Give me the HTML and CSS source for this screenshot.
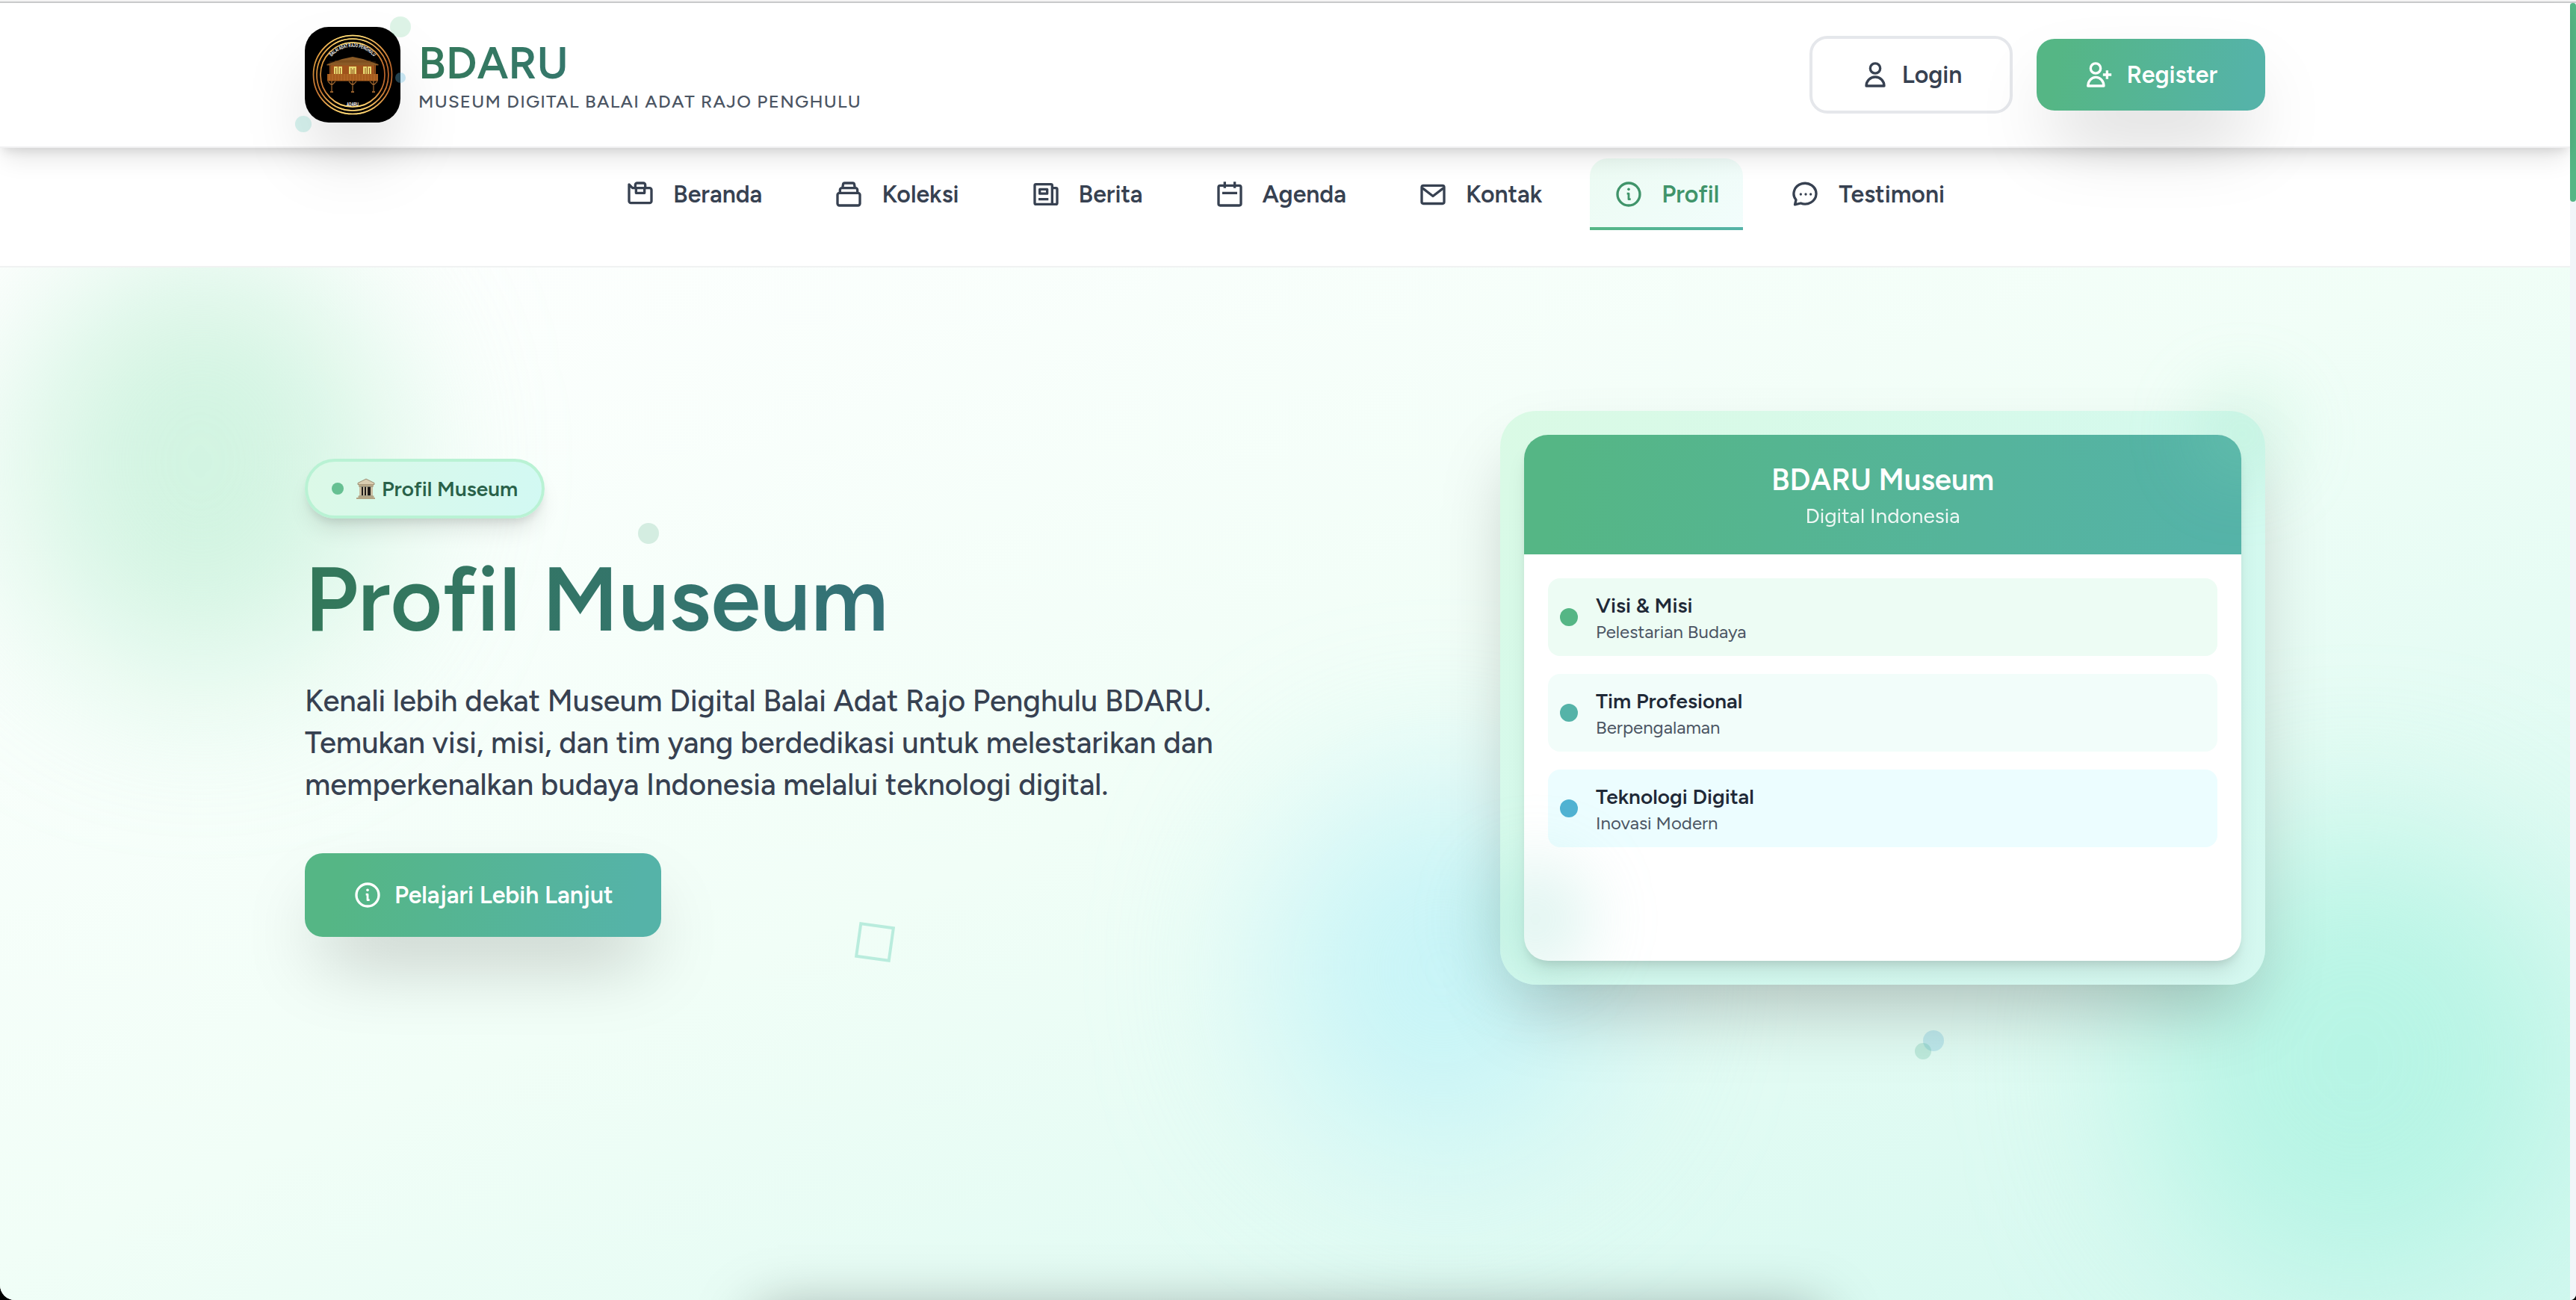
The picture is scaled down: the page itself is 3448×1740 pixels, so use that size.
FILE: index.html
```html
<!DOCTYPE html>
<html lang="id">
<head>
<meta charset="utf-8">
<title>Profil Museum - BDARU</title>
<link rel="stylesheet" href="styles.css">
</head>
<body>
<div class="window">
<div class="page">
  <header class="header">
    <div class="container header-row">
      <a class="brand">
        <span class="logo">
          <svg class="logo-art" viewBox="0 0 128 128" aria-hidden="true">
            <defs>
              <linearGradient id="gold" x1="0" y1="0" x2="1" y2="1">
                <stop offset="0" stop-color="#b5642a"/>
                <stop offset=".18" stop-color="#e0a040"/>
                <stop offset=".38" stop-color="#b5602a"/>
                <stop offset=".6" stop-color="#c06a2c"/>
                <stop offset=".85" stop-color="#b5602a"/>
                <stop offset="1" stop-color="#e0a040"/>
              </linearGradient>
              <linearGradient id="shine" x1="0" y1="0" x2="0" y2="1">
                <stop offset="0" stop-color="#ffe27a"/>
                <stop offset=".22" stop-color="#e8a548" stop-opacity=".5"/>
                <stop offset=".45" stop-color="#c06a2c" stop-opacity="0"/>
                <stop offset=".75" stop-color="#e8a548" stop-opacity=".4"/>
                <stop offset="1" stop-color="#ffe27a"/>
              </linearGradient>
              <path id="arc-top" d="M35.500 40A37.500 37.500 0 0 1 92.500 40"/>
            </defs>
            <rect width="128" height="128" fill="#000"/>
            <g fill="none" stroke="url(#gold)" stroke-width="1.7">
              <circle cx="64" cy="64" r="52.5"/><circle cx="64" cy="64" r="48"/><circle cx="64" cy="64" r="43"/>
            </g>
            <g fill="none" stroke="url(#shine)" stroke-width="1.7">
              <circle cx="64" cy="64" r="52.5"/><circle cx="64" cy="64" r="48"/><circle cx="64" cy="64" r="43"/>
            </g>
            <text class="logo-text"><textPath href="#arc-top" startOffset="50%" text-anchor="middle" textLength="64" lengthAdjust="spacingAndGlyphs">BALAI ADAT RAJO PENGHULU</textPath></text>
            <text class="logo-text" x="64" y="106" text-anchor="middle" textLength="16" lengthAdjust="spacingAndGlyphs">ADARU</text>
            <path d="M33 51H95V64H33Z" fill="#a0521c"/>
            <path d="M29.500 51.500V50L50 43l14-3 14 3 20.500 7V51.500Z" fill="#8a5a26"/>
            <path d="M33 47H95M40 45.500H88" stroke="#6d4218" stroke-width=".6"/>
            <path d="M34.500 51v12M93.500 51v12" stroke="#6d4218"/>
            <path d="M39 53h11v10H39zM59 53h10v10H59zM78 53h11v10H78z" fill="#e8d870"/>
            <path d="M41.500 55v8M44.500 53v10M47.500 55v8M62 55v8M64 57v6M66 55v8M81 55v8M83.500 53v10M86.500 55v8" stroke="#8a4a18" stroke-width=".9"/>
            <path d="M30 63H98V72.500H30Z" fill="#a65c1e"/>
            <path d="M33 63v9M37 63v9M41 63v9M45 63v9M49 63v9M53 63v9M57 63v9M61 63v9M65 63v9M69 63v9M73 63v9M77 63v9M81 63v9M85 63v9M89 63v9M93 63v9M97 63v9" stroke="#c87c38" stroke-width=".6"/>
            <path d="M36 72v15M64 72v15M92 72v15M31 73l5 5 5-5M59 73l5 5 5-5M87 73l5 5 5-5" fill="none" stroke="#96602c" stroke-width="1.300"/>
            <path d="M34 86h4v2h-4zM62 86h4v2h-4zM90 86h4v2h-4z" fill="#96602c"/>
          </svg>
          <i class="dot dot-green"></i><i class="dot dot-teal"></i><i class="dot dot-blue"></i>
        </span>
        <span class="brand-text">
          <strong class="brand-name">BDARU</strong>
          <span class="brand-tag">MUSEUM DIGITAL BALAI ADAT RAJO PENGHULU</span>
        </span>
      </a>
      <div class="actions">
        <a class="btn btn-outline">
          <svg class="icon" viewBox="0 0 24 24"><circle cx="12" cy="6.900" r="4"/><path d="M4.800 21a7.200 7.200 0 0 1 14.400 0Z"/></svg>
          Login
        </a>
        <a class="btn btn-fill">
          <svg class="icon" viewBox="0 0 24 24"><circle cx="9" cy="6.900" r="4"/><path d="M2.800 21a6.400 7 0 0 1 12.800 0Z"/><path d="M18.200 8.500v7M14.900 12h6.800"/></svg>
          Register
        </a>
      </div>
    </div>
  </header>

  <nav class="nav">
    <a class="nav-item"><svg class="icon" viewBox="0 0 24 24"><path d="M3 4.200V17.500A1.500 1.500 0 0 0 4.500 19h15a1.500 1.500 0 0 0 1.500-1.500v-9A1.500 1.500 0 0 0 19.500 7H5.800Z"/><path d="M8 7V4.500A1.500 1.500 0 0 1 9.500 3h5A1.500 1.500 0 0 1 16 4.500V7M8.600 7v4h6.800V7"/></svg>Beranda</a>
    <a class="nav-item"><svg class="icon" viewBox="0 0 24 24"><rect x="3" y="11" width="18" height="10" rx="1.500"/><path d="M5 11V8.500A1.500 1.500 0 0 1 6.500 7h11A1.500 1.500 0 0 1 19 8.500V11M7 7l.5-2.900A1.300 1.300 0 0 1 8.800 3h6.400a1.300 1.300 0 0 1 1.300 1.100L17 7"/></svg>Koleksi</a>
    <a class="nav-item"><svg class="icon" viewBox="0 0 24 24"><path d="M17 20V5a1 1 0 0 0-1-1H4a1 1 0 0 0-1 1v14a1 1 0 0 0 1 1h16a1 1 0 0 0 1-1V8a1 1 0 0 0-1-1h-3"/><path d="M7 8h6v3.500H7ZM6 16h8"/></svg>Berita</a>
    <a class="nav-item"><svg class="icon" viewBox="0 0 24 24"><rect x="3" y="5" width="18" height="16" rx="1.300"/><path d="M8 2v5M16 2v5M6 11h12"/></svg>Agenda</a>
    <a class="nav-item"><svg class="icon" viewBox="0 0 24 24"><rect x="3" y="5" width="18" height="14.500" rx="1.300"/><path d="M3.500 7l8.500 6.500L20.500 7"/></svg>Kontak</a>
    <a class="nav-item active"><svg class="icon" viewBox="0 0 24 24"><circle cx="12" cy="12" r="9"/><path d="M10.600 11.500H12V16h1.600" stroke-width="1.700"/><circle class="solid" cx="12" cy="8" r="1.100"/></svg>Profil</a>
    <a class="nav-item"><svg class="icon" viewBox="0 0 24 24"><path d="M4.200 16.500A9 8.300 0 1 1 8 19.200L3.300 20.300Z"/><circle class="solid" cx="8" cy="12" r="1"/><circle class="solid" cx="12" cy="12" r="1"/><circle class="solid" cx="16" cy="12" r="1"/></svg>Testimoni</a>
  </nav>

  <main class="hero">
    <i class="blob blob-green"></i><i class="blob blob-cyan"></i><i class="blob blob-teal"></i>
    <i class="bubble bubble-a"></i><i class="bubble bubble-b"></i><i class="bubble bubble-c"></i><i class="square"></i>
    <div class="container hero-row">
      <section class="intro">
        <span class="badge">
          <i class="badge-dot"></i>
          <svg class="museum" viewBox="0 0 28 28" role="img" aria-label="Museum">
            <path d="M14 1 25 6.500V8.500H3V6.500Z" fill="#d9cdb0" stroke="#8b7a5e" stroke-width=".8"/>
            <rect x="4" y="8.500" width="20" height="3" fill="#b8a888"/>
            <rect x="5" y="11.500" width="18" height="12" fill="#1e1a18"/>
            <path d="M5 11.500h3v12H5zM10 11.500h2v12h-2zM14 11.500h2v12h-2zM20 11.500h3v12h-3z" fill="#c9bca0"/>
            <path d="M3.500 23.500h21V26H26v2H1v-2h2.500Z" fill="#b3a585"/>
          </svg>
          <span>Profil Museum</span>
        </span>
        <h1 class="title"><span>Profil Museum</span></h1>
        <p class="lead">Kenali lebih dekat Museum Digital Balai Adat Rajo Penghulu BDARU.<br>Temukan visi, misi, dan tim yang berdedikasi untuk melestarikan dan<br>memperkenalkan budaya Indonesia melalui teknologi digital.</p>
        <a class="btn btn-fill btn-large">
          <svg class="icon" viewBox="0 0 24 24"><circle cx="12" cy="12" r="9"/><path d="M10.600 11.500H12V16h1.600" stroke-width="1.700"/><circle class="solid" cx="12" cy="8" r="1.100"/></svg>
          Pelajari Lebih Lanjut
        </a>
      </section>

      <section class="frame">
        <div class="card">
          <div class="card-head">
            <h2>BDARU Museum</h2>
            <p>Digital Indonesia</p>
          </div>
          <ul class="card-body">
            <li class="row row-green"><i></i><div><h3>Visi &amp; Misi</h3><p>Pelestarian Budaya</p></div></li>
            <li class="row row-teal"><i></i><div><h3>Tim Profesional</h3><p>Berpengalaman</p></div></li>
            <li class="row row-cyan"><i></i><div><h3>Teknologi Digital</h3><p>Inovasi Modern</p></div></li>
          </ul>
        </div>
        <i class="glow glow-top"></i><i class="glow glow-bottom"></i>
      </section>
    </div>
    <div class="next-panel"></div>
  </main>
</div>
<div class="scrollbar"><div class="thumb"></div></div>
</div>
</body>
</html>
```

FILE: styles.css
```css
* { box-sizing: border-box; margin: 0; padding: 0; }

body {
  background: #000;
  font-family: "Figtree", "Lato", sans-serif;
  font-size: 32px;
  color: #374151;
}

.window {
  display: flex;
  height: 1740px;
  border-top: 2px solid #f4f4f4;
  border-radius: 0 0 8px 20px;
  overflow: hidden;
  background: #fff;
}

.page {
  flex: 1;
  display: flex;
  flex-direction: column;
  border-top: 2px solid #c9cacb;
}

.scrollbar { width: 8px; background: #f1f5f9; border-top: 2px solid #c9cacb; }
.thumb { height: 266px; border-radius: 8px; background: #55b685; }

.container { width: 2624px; margin: 0 auto; }

.icon {
  width: 40px;
  height: 40px;
  flex: none;
  fill: none;
  stroke: currentColor;
  stroke-width: 2;
  stroke-linejoin: round;
}
.icon .solid { fill: currentColor; stroke: none; }

/* header */
.header {
  position: relative;
  z-index: 2;
  height: 194px;
  flex: none;
  background: #fff;
  border-bottom: 2px solid #f1f1f2;
  box-shadow: 0 20px 30px -6px rgba(0, 0, 0, .1), 0 8px 12px -4px rgba(0, 0, 0, .1);
}
.header-row { display: flex; align-items: center; justify-content: space-between; height: 192px; }
.brand { display: flex; align-items: center; gap: 24px; }
.logo { position: relative; width: 128px; height: 128px; }
.logo-art {
  display: block;
  width: 128px;
  height: 128px;
  border-radius: 32px;
  box-shadow: 0 50px 100px -24px rgba(0, 0, 0, .25);
}
.logo-text { fill: #fff; font-family: "Liberation Sans", sans-serif; font-size: 7px; font-weight: 700; }
.dot { position: absolute; border-radius: 50%; }
.dot-green { width: 28px; height: 28px; top: -14px; right: -14px; background: rgba(104, 205, 145, .22); }
.dot-teal { width: 22px; height: 22px; bottom: -13px; left: -13px; background: rgba(90, 200, 185, .25); }
.dot-blue { width: 14px; height: 14px; top: 61px; right: -7px; background: rgba(103, 190, 225, .35); }

.brand-text { display: flex; flex-direction: column; }
.brand-name {
  align-self: flex-start;
  font-size: 60px;
  font-weight: 600;
  line-height: 72px;
  color: transparent;
  background: linear-gradient(90deg, #34795a, #35776c);
  background-clip: text;
}
.brand-tag { font-size: 24px; font-weight: 500; line-height: 32px; letter-spacing: 1.28px; color: #4b5563; }

.actions { display: flex; align-items: center; gap: 32px; }
.btn {
  display: inline-flex;
  align-items: center;
  gap: 16px;
  height: 96px;
  padding: 0 64px;
  border-radius: 24px;
  font-weight: 600;
  line-height: 48px;
}
.btn-outline { height: 104px; border: 4px solid #e5e7eb; }
.btn-fill {
  color: #fff;
  background: linear-gradient(100deg, #55b685 10%, #55b3a8 92%);
  box-shadow: 0 50px 100px -24px rgba(0, 0, 0, .25);
}
.btn-large { height: 112px; margin-top: 64px; }

/* navigation */
.nav {
  height: 160px;
  flex: none;
  display: flex;
  justify-content: center;
  align-items: flex-start;
  gap: 32px;
  padding: 14px 0 0;
  background: #fff;
  border-bottom: 2px solid #f0f2f2;
}
.nav-item {
  display: flex;
  align-items: center;
  gap: 24px;
  height: 96px;
  padding: 0 32px;
  border-radius: 24px;
  font-weight: 600;
}
.nav-item.active {
  color: #40946a;
  border-radius: 24px 24px 0 0;
  background:
    linear-gradient(90deg, #55b685, #55b3a8) bottom / 100% 4px no-repeat,
    linear-gradient(135deg, #ecfbf3, #f2fdfc);
}

/* hero */
.hero {
  position: relative;
  flex: 1;
  padding-top: 192px;
  overflow: hidden;
  background: linear-gradient(to right bottom, #fff 0%, #f1fef7 48%, #d2f8ef 100%);
}
.blob, .bubble, .square, .glow { position: absolute; border-radius: 50%; }
.blob { filter: blur(112px); }
.blob-green { left: 18px; top: -30px; width: 500px; height: 580px; background: rgba(170, 234, 200, .52); }
.blob-cyan { left: 1700px; top: 690px; width: 460px; height: 500px; background: rgba(180, 240, 248, .64); }
.blob-teal { left: 2860px; top: 750px; width: 590px; height: 620px; background: rgba(155, 240, 220, .56); }
.bubble-a { left: 854px; top: 342px; width: 28px; height: 28px; background: #d4ede1; }
.bubble-b { left: 2574px; top: 1021px; width: 28px; height: 28px; background: rgba(105, 190, 220, .3); }
.bubble-c { left: 2563px; top: 1038px; width: 22px; height: 22px; background: rgba(85, 182, 150, .25); }
.square { left: 1147px; top: 879px; width: 48px; height: 48px; border: 4px solid #b9ecdd; border-radius: 0; transform: rotate(8deg); }

.hero-row { position: relative; display: flex; align-items: center; justify-content: space-between; }
.intro { display: flex; flex-direction: column; align-items: flex-start; }
.badge {
  display: flex;
  align-items: center;
  height: 80px;
  padding: 0 32px;
  border: 4px solid #b9f2d4;
  border-radius: 40px;
  background: linear-gradient(100deg, #dcf9e7, #d2f9f3);
  box-shadow: 0 20px 30px -6px rgba(0, 0, 0, .1), 0 8px 12px -4px rgba(0, 0, 0, .1);
  font-size: 28px;
  font-weight: 600;
  color: #296149;
}
.badge-dot { width: 16px; height: 16px; margin-right: 16px; border-radius: 50%; background: #66c092; }
.museum { width: 28px; height: 28px; margin-right: 7px; }
.title { margin: 48px 0; font-size: 120px; font-weight: 600; line-height: 120px; height: 120px; }
.title span {
  display: block;
  color: transparent;
  background: linear-gradient(90deg, #33785a, #347278);
  background-clip: text;
}
.lead { font-size: 40px; font-weight: 500; line-height: 56px; }

/* museum card */
.frame {
  position: relative;
  width: 1024px;
  height: 768px;
  padding: 32px;
  border-radius: 48px;
  background: linear-gradient(to right bottom, #dafae5, #d3f9ef 60%, #d5f8f0);
  box-shadow: 0 50px 100px -24px rgba(0, 0, 0, .25);
}
.card {
  height: 704px;
  border-radius: 32px;
  overflow: hidden;
  background: #fff;
  box-shadow: 0 20px 30px -6px rgba(0, 0, 0, .1), 0 8px 12px -4px rgba(0, 0, 0, .1);
}
.card-head {
  height: 160px;
  padding: 32px;
  text-align: center;
  color: #fff;
  background: linear-gradient(98deg, #55b685 5%, #55b3a8 95%);
}
.card-head h2 { font-size: 40px; font-weight: 600; line-height: 56px; }
.card-head p { font-size: 28px; line-height: 40px; opacity: .9; }
.card-body { display: flex; flex-direction: column; gap: 24px; padding: 32px; list-style: none; }
.row { display: flex; align-items: center; gap: 24px; height: 104px; padding: 16px; border-radius: 16px; }
.row i { width: 24px; height: 24px; border-radius: 50%; }
.row h3 { font-size: 28px; font-weight: 600; line-height: 40px; color: #1f2937; }
.row p { font-size: 24px; line-height: 32px; color: #4b5563; }
.row-green { background: #edfcf4; }
.row-green i { background: #55b685; }
.row-teal { background: #f2fdfa; }
.row-teal i { background: #55b3a8; }
.row-cyan { background: #ecfdff; }
.row-cyan i { background: #50b2d2; }
.glow { filter: blur(44px); }
.glow-top { right: -34px; top: -34px; width: 130px; height: 130px; background: rgba(140, 225, 180, .22); }
.glow-bottom { left: -28px; bottom: 8px; width: 150px; height: 160px; background: rgba(130, 215, 195, .24); }

/* top edge of the following panel, just under the fold */
.next-panel {
  position: absolute;
  left: 1002px;
  top: 1388px;
  width: 1446px;
  height: 400px;
  box-shadow: 0 0 76px -12px rgba(0, 0, 0, .36);
}
```
